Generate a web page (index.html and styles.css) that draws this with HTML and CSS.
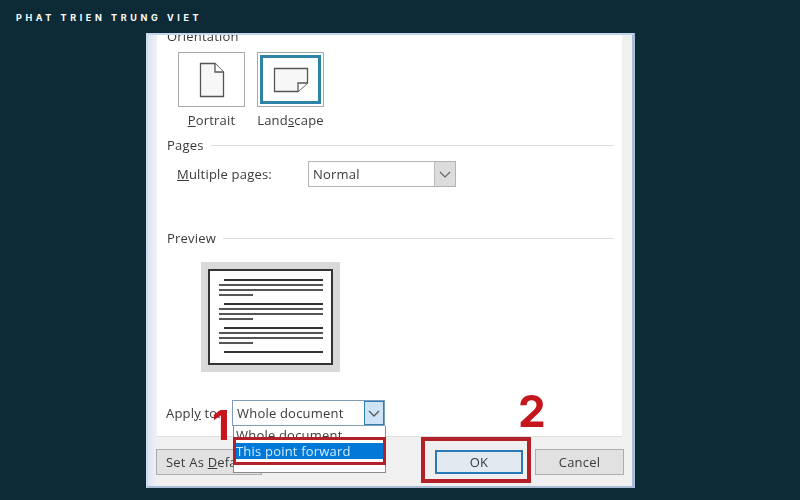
FILE: index.html
```html
<!DOCTYPE html>
<html lang="en">
<head>
    <meta charset="UTF-8">
    <title>Phat Trien Trung Viet</title>
    <link rel="stylesheet" href="styles.css">
</head>
<body>
    <div class="brand">PHAT TRIEN TRUNG VIET</div>

    <div class="dialog">
        <div class="panel">
            <div class="heading cut">Orientation</div>
            <div class="orient">
                <div class="orient-item">
                    <div class="orient-box">
                        <svg width="26" height="36" viewBox="0 0 26 36">
                            <path d="M1.5 1.5H16L24.5 10V34.5H1.5Z" fill="#f7f7f7" stroke="#555" stroke-width="1.3"/>
                            <path d="M16 1.5V10H24.5" fill="#fff" stroke="#555" stroke-width="1.3"/>
                        </svg>
                    </div>
                    <div class="orient-label"><u>P</u>ortrait</div>
                </div>
                <div class="orient-item">
                    <div class="orient-box selected">
                        <svg width="36" height="26" viewBox="0 0 36 26">
                            <path d="M1.5 1.5H34.5V16L25 24.5H1.5Z" fill="#f7f7f7" stroke="#555" stroke-width="1.3"/>
                            <path d="M34.5 16H25V24.5" fill="#fff" stroke="#555" stroke-width="1.3"/>
                        </svg>
                    </div>
                    <div class="orient-label">Land<u>s</u>cape</div>
                </div>
            </div>

            <div class="heading">Pages</div>
            <div class="pages-row">
                <label class="pages-label"><u>M</u>ultiple pages:</label>
                <div class="combo">
                    <span class="combo-text">Normal</span>
                    <span class="combo-btn">
                        <svg width="12" height="7" viewBox="0 0 12 7"><path d="M1 1L6 6L11 1" fill="none" stroke="#666" stroke-width="1.2"/></svg>
                    </span>
                </div>
            </div>

            <div class="heading preview-heading">Preview</div>
            <div class="preview">
                <div class="sheet">
                    <div class="para">
                        <i class="first"></i><i></i><i></i><i class="short"></i>
                    </div>
                    <div class="para">
                        <i class="first"></i><i></i><i></i><i class="short"></i>
                    </div>
                    <div class="para">
                        <i class="first"></i><i></i><i></i><i class="short"></i>
                    </div>
                    <div class="para">
                        <i class="first"></i>
                    </div>
                </div>
            </div>

            <div class="apply-row">
                <label class="apply-label">Appl<u>y</u> to:</label>
                <div class="combo apply-combo">
                    <span class="combo-text">Whole document</span>
                    <span class="combo-btn active">
                        <svg width="12" height="7" viewBox="0 0 12 7"><path d="M1 1L6 6L11 1" fill="none" stroke="#555" stroke-width="1.3"/></svg>
                    </span>
                </div>
            </div>
        </div>

        <div class="footer">
            <button class="btn default-btn">Set As <u>D</u>efault</button>
            <button class="btn ok-btn">OK</button>
            <button class="btn">Cancel</button>
        </div>

        <!-- open dropdown -->
        <div class="dropdown">
            <div class="option">Whole document</div>
            <div class="option picked">This point forward</div>
        </div>

        <!-- red markers -->
        <div class="mark-box mark-option"></div>
        <div class="mark-box mark-ok"></div>
        <div class="mark-num mark-one">1</div>
        <div class="mark-num mark-two">2</div>
    </div>
</body>
</html>
```

FILE: styles.css
```css
body {
    margin: 0;
    height: 500px;
    overflow: hidden;
    background-color: #0d2b36;
    font-family: "Open Sans", "Noto Sans", sans-serif;
    color: #3a3a3a;
}

.brand {
    height: 33px;
    box-sizing: border-box;
    padding: 11px 0 0 16px;
    font-family: Inter, sans-serif;
    font-size: 9px;
    line-height: 14px;
    font-weight: 700;
    letter-spacing: 3.6px;
    color: #fff;
}

.dialog {
    position: relative;
    width: 489px;
    height: 455px;
    box-sizing: border-box;
    margin-left: 146px;
    padding: 0 10px 0 9px;
    background: linear-gradient(to right, #dbe6f4, #eef1f5 9px, #f0f0f0 10px);
    border-top: 2px solid #c4d6ea;
    border-bottom: 2px solid #a9bcd6;
    border-right: 3px solid #a9bcd6;
    border-left: 2px solid #cfdcec;
    font-size: 13px;
    letter-spacing: 0.2px;
    filter: blur(0.5px);
}

.panel {
    height: 402px;
    box-sizing: border-box;
    padding-left: 10px;
    background-color: #fff;
    border-bottom: 1px solid #dedede;
    overflow: hidden;
}

.heading {
    display: flex;
    align-items: center;
    gap: 7px;
    height: 16px;
    margin-top: 9px;
    margin-right: 8px;
    line-height: 16px;
}

.heading::after {
    content: "";
    flex: 1;
    height: 1px;
    background-color: #dcdcdc;
}

.heading.cut {
    margin-top: -7px;
}

.heading.cut::after {
    display: none;
}

.orient {
    display: flex;
    gap: 12px;
    margin: 8px 0 0 11px;
}

.orient-item {
    width: 67px;
}

.orient-box {
    display: flex;
    align-items: center;
    justify-content: center;
    height: 55px;
    box-sizing: border-box;
    border: 1px solid #a8a8a8;
}

.orient-box.selected {
    box-shadow: inset 0 0 0 2px #fff, inset 0 0 0 5px #2d84a6;
}

.orient-label {
    margin-top: 5px;
    text-align: center;
    line-height: 16px;
    white-space: nowrap;
}

.pages-row {
    display: flex;
    align-items: center;
    margin: 8px 0 0 10px;
}

.pages-label {
    width: 131px;
}

.combo {
    display: flex;
    align-items: center;
    width: 148px;
    height: 26px;
    box-sizing: border-box;
    border: 1px solid #b4b4b4;
    background-color: #fff;
}

.combo-text {
    flex: 1;
    padding-left: 4px;
}

.combo-btn {
    display: flex;
    align-items: center;
    justify-content: center;
    width: 20px;
    height: 24px;
    background-color: #dcdcdc;
    border-left: 1px solid #bcbcbc;
}

.combo-btn.active {
    background-color: #cde4f7;
    border: 1px solid #2f7fb5;
    height: 24px;
    box-sizing: border-box;
}

.preview-heading {
    margin-top: 43px;
}

.preview {
    width: 139px;
    height: 110px;
    box-sizing: border-box;
    margin: 16px 0 0 34px;
    padding: 7px;
    background-color: #d9d9d9;
}

.sheet {
    height: 96px;
    box-sizing: border-box;
    border: 2px solid #333;
    padding: 8px 9px 0 9px;
    background-color: #fff;
}

.para {
    display: flex;
    flex-direction: column;
    gap: 3px;
    margin-bottom: 7px;
}

.para i {
    display: block;
    width: 104px;
    height: 2px;
    background-color: #555;
}

.para i.first {
    width: 99px;
    margin-left: 5px;
    background-color: #333;
}

.para i.short {
    width: 34px;
}

.apply-row {
    display: flex;
    align-items: center;
    margin-top: 28px;
}

.apply-label {
    width: 66px;
    margin-left: -1px;
    white-space: nowrap;
}

.apply-combo {
    width: 153px;
    height: 26px;
    border-color: #7f9db9;
}

.footer {
    display: flex;
    align-items: center;
    gap: 12px;
    height: 50px;
    margin: 0 -2px 0 -1px;
}

.btn {
    width: 89px;
    height: 26px;
    padding: 0;
    border: 1px solid #adadad;
    background-color: #e1e1e1;
    font-family: inherit;
    font-size: 13px;
    letter-spacing: 0.2px;
    color: #3a3a3a;
}

.default-btn {
    width: 106px;
    margin-right: auto;
    text-align: left;
    padding-left: 9px;
}

.ok-btn {
    width: 88px;
    height: 24px;
    border: 2px solid #2b7ab8;
    background-color: #e2eaf1;
}

.dropdown {
    position: absolute;
    left: 85px;
    top: 391px;
    width: 153px;
    height: 47px;
    box-sizing: border-box;
    border: 1px solid #8a8a8a;
    border-top: none;
    padding: 1px 1px 0;
    background-color: #fff;
    line-height: 16px;
}

.option {
    height: 16px;
    padding-left: 1px;
    white-space: nowrap;
}

.option.picked {
    background-color: #0078d7;
    color: #cfeaff;
}

.mark-box {
    position: absolute;
    box-sizing: border-box;
    border: 3px solid #b3202a;
}

.mark-option {
    left: 85px;
    top: 402px;
    width: 153px;
    height: 28px;
}

.mark-ok {
    left: 273px;
    top: 402px;
    width: 110px;
    height: 46px;
    border-width: 4px;
}

.mark-num {
    position: absolute;
    font-family: Inter, sans-serif;
    font-weight: 700;
    letter-spacing: 0;
    color: #c5161d;
}

.mark-one {
    left: 64px;
    top: 365px;
    font-size: 41px;
    line-height: 50px;
}

.mark-two {
    left: 370px;
    top: 351px;
    font-size: 44px;
    line-height: 50px;
}
```
